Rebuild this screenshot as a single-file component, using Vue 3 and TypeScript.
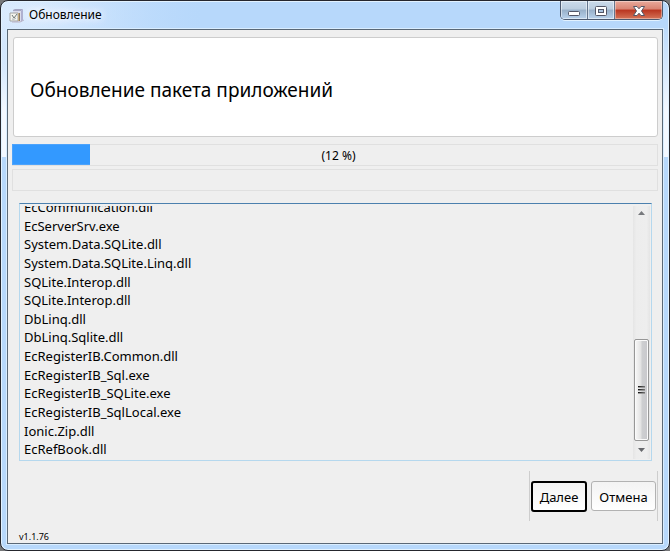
<script setup lang="ts">
import { computed, ref } from 'vue'

const percent = ref<number>(12)
const barStyle = computed(() => ({ width: `${percent.value}%` }))

const files: string[] = [
  'EcCommunication.dll',
  'EcServerSrv.exe',
  'System.Data.SQLite.dll',
  'System.Data.SQLite.Linq.dll',
  'SQLite.Interop.dll',
  'SQLite.Interop.dll',
  'DbLinq.dll',
  'DbLinq.Sqlite.dll',
  'EcRegisterIB.Common.dll',
  'EcRegisterIB_Sql.exe',
  'EcRegisterIB_SQLite.exe',
  'EcRegisterIB_SqlLocal.exe',
  'Ionic.Zip.dll',
  'EcRefBook.dll',
]
</script>

<template>
  <div class="window">
    <header class="titlebar">
      <svg class="app-icon" viewBox="0 0 16 16" aria-hidden="true">
        <path d="M4 2 6 1h8v11l-3 2H5z" fill="#dcdcec" />
        <path d="M4 2 6 1h8l-2 2H4z" fill="#a5a7c4" />
        <path d="M12 3l2-2v11l-2 2z" fill="#aeb0d0" />
        <path d="M8 5h3v8H8z" fill="#e8b458" />
        <path d="M10 5h1v8h-1z" fill="#8a7a68" />
        <path d="M1 5h8v8H1z" fill="#f4f4ee" stroke="#a2a4a4" />
        <path d="M3 7l2 3 3-4" fill="none" stroke="#6d7675" />
        <path d="M3 11q2 1 4-1" fill="none" stroke="#a8b0b5" />
        <path d="M3 14h8l4-2" fill="none" stroke="#b9b4c6" />
      </svg>
      <h1 class="caption">Обновление</h1>
      <div class="controls">
        <button class="control" type="button" aria-label="Свернуть">
          <svg width="14" height="14" viewBox="0 0 14 14">
            <rect x="1.500" y="6.500" width="11" height="4" rx="1" fill="#fff" stroke="#535666" />
          </svg>
        </button>
        <button class="control" type="button" aria-label="Развернуть">
          <svg width="14" height="14" viewBox="0 0 14 14">
            <rect x="1.500" y="1.500" width="11" height="9" rx="1" fill="#fff" stroke="#535666" />
            <rect x="4.500" y="4.500" width="5" height="3" fill="#a9c3df" stroke="#535666" />
          </svg>
        </button>
        <button class="control close" type="button" aria-label="Закрыть">
          <svg width="14" height="14" viewBox="0 0 14 14">
            <path
              d="M1.500 1.500H5L7 3.800 9 1.500h3.500L9.500 6l3 4.500H9L7 8.200 5 10.500H1.500l3-4.500z"
              fill="#fff"
              stroke="#535666"
              stroke-linejoin="round"
            />
          </svg>
        </button>
      </div>
    </header>

    <main class="client">
      <section class="banner">
        <h2>Обновление пакета приложений</h2>
      </section>

      <div class="bars">
        <div class="bar" role="progressbar" :aria-valuenow="percent" aria-valuemin="0" aria-valuemax="100">
          <div class="fill" :style="barStyle"></div>
          <span class="percent">({{ percent }} %)</span>
        </div>
        <div class="bar" role="progressbar"></div>
      </div>

      <section class="log">
        <div class="viewport">
          <ul class="files">
            <li v-for="(file, i) in files" :key="i">{{ file }}</li>
          </ul>
        </div>
        <div class="scrollbar">
          <svg class="arrow" viewBox="0 0 7 4"><path d="M0 4 3.500 0 7 4z" fill="#77797d" /></svg>
          <div class="track">
            <div class="thumb"><i></i><i></i><i></i></div>
          </div>
          <svg class="arrow" viewBox="0 0 7 4"><path d="M0 0h7L3.500 4z" fill="#66686c" /></svg>
        </div>
      </section>

      <div class="actions">
        <div class="group">
          <button class="action primary" type="button">Далее</button>
          <button class="action" type="button">Отмена</button>
        </div>
      </div>

      <footer class="version">v1.1.76</footer>
    </main>
  </div>
</template>

<style>
body {
  background: #77787a;
}
</style>

<style scoped>
* {
  box-sizing: border-box;
}

.window {
  display: flex;
  flex-direction: column;
  min-height: 100vh;
  padding: 0 6px 6px;
  border: 1px solid #25262d;
  border-radius: 8px;
  box-shadow: inset 0 0 0 1px #e2f2ff;
  background:
    linear-gradient(90deg, #b7d8fb00 0, #b7d8fb 200px) 0 0 / 100% 28px no-repeat,
    radial-gradient(ellipse 190px 60px at 50px 12px, #e6f1ff, #e6f1ff00),
    linear-gradient(#f3f8ff00 20px, #f3f8ff 110px, #f3f8ff 156px, #f3f8ff00 156px),
    #b7d8fb;
  font-family: "Noto Sans", "Open Sans", sans-serif;
  font-size: 13px;
  color: #000;
}

.titlebar {
  display: flex;
  flex: none;
  height: 28px;
}

.app-icon {
  width: 16px;
  height: 16px;
  margin: 7px 4px 0 2px;
}

.caption {
  margin: 4px 0 0;
  font-size: 12px;
  font-weight: 400;
  line-height: 20px;
  text-shadow: 0 0 8px #fff, 0 0 8px #fff;
}

.controls {
  display: flex;
  height: 19px;
  margin-left: auto;
  border: 1px solid #4c5a70;
  border-top: 0;
  border-radius: 0 0 5px 5px;
  box-shadow: 0 1px #e2f2ff;
  overflow: hidden;
}

.control {
  display: flex;
  align-items: center;
  justify-content: center;
  width: 27px;
  padding: 3px 0 0;
  border: 0;
  border-right: 1px solid #63758d;
  box-shadow: inset 0 0 0 1px #ffffff80;
  background: linear-gradient(#cbdbeb 0, #bbcddf 45%, #98b0c9 50%, #b8d2ec);
}

.control.close {
  width: 47px;
  border-right: 0;
  box-shadow: inset 0 0 0 1px #ffffff60;
  background: linear-gradient(#e9aa9c 0, #d98372 45%, #b93520 50%, #d57458);
}

.client {
  display: flex;
  flex: 1;
  flex-direction: column;
  border: 1px solid #5a6876;
  box-shadow: 0 0 0 1px #d9edff;
  background: #efefef;
}

.banner {
  display: flex;
  align-items: center;
  height: 100px;
  margin: 7px 4px 0 5px;
  padding: 5px 16px 0;
  border: 1px solid #cdcdcd;
  border-radius: 3px;
  background: #fff;
}

.banner h2 {
  margin: 0;
  font-size: 19px;
  font-weight: 400;
  line-height: 28px;
}

.bars {
  display: grid;
  gap: 3px;
  margin: 7px 4px 0;
}

.bar {
  display: grid;
  height: 22px;
  border: 1px solid #e0e0e0;
}

.fill,
.percent {
  grid-area: 1 / 1;
}

.fill {
  box-sizing: content-box;
  height: 19px;
  margin: -1px 0 0 -1px;
  border: 1px solid #4ca3fc;
  border-right: 0;
  background: #3399ff;
}

.percent {
  justify-self: center;
  padding-left: 7px;
  font-size: 12px;
  line-height: 22px;
}

.log {
  display: flex;
  height: 258px;
  margin: 12px 10px 0 11px;
  padding: 2px 1px 1px 4px;
  border: 1px solid #b5d8ee;
  border-top-color: #4b80ae;
}

.viewport {
  display: flex;
  flex: 1;
  align-items: flex-end;
  overflow: hidden;
}

.files {
  display: grid;
  grid-auto-rows: 1fr;
  height: 261px;
  margin: 0;
  padding: 0;
  list-style: none;
}

.files li {
  line-height: 18px;
  white-space: nowrap;
}

.scrollbar {
  display: flex;
  flex-direction: column;
  align-items: center;
  width: 17px;
  padding: 5px 0 7px;
  background: linear-gradient(90deg, #e5e5e5, #ededed 20%, #eeeeee 80%, #e5e5e5);
}

.arrow {
  width: 7px;
  height: 4px;
}

.track {
  display: flex;
  flex: 1;
  flex-direction: column;
  justify-content: flex-end;
  margin-bottom: 7px;
}

.thumb {
  display: flex;
  flex-direction: column;
  align-items: center;
  justify-content: center;
  gap: 1px;
  width: 15px;
  height: 102px;
  border: 1px solid #979797;
  border-radius: 2px;
  box-shadow: inset 0 0 0 1px #fafafa;
  background: linear-gradient(90deg, #f4f4f4 10%, #e1e1e1 48%, #cecfd1 52%, #c8c8cc);
}

.thumb i {
  width: 7px;
  height: 2px;
  border-bottom: 1px solid #999;
  background: linear-gradient(90deg, #111, #777);
}

.actions {
  display: flex;
  justify-content: flex-end;
  margin: 10px 4px 0;
}

.group {
  display: flex;
  align-items: center;
  gap: 4px;
  height: 50px;
  padding: 0 1px;
  border: solid #cdcdcd;
  border-width: 0 1px;
}

.action {
  width: 65px;
  height: 30px;
  padding: 2px 0 0;
  border: 1px solid #b2b2b2;
  border-radius: 3px;
  background: linear-gradient(#f3f3f3, #fff);
  font: inherit;
  color: inherit;
}

.action.primary {
  width: 56px;
  height: 31px;
  padding: 2px 0 0;
  border: 2px solid #000;
}

.version {
  margin: auto 11px 0;
  font-size: 9px;
  line-height: 13px;
}
</style>
